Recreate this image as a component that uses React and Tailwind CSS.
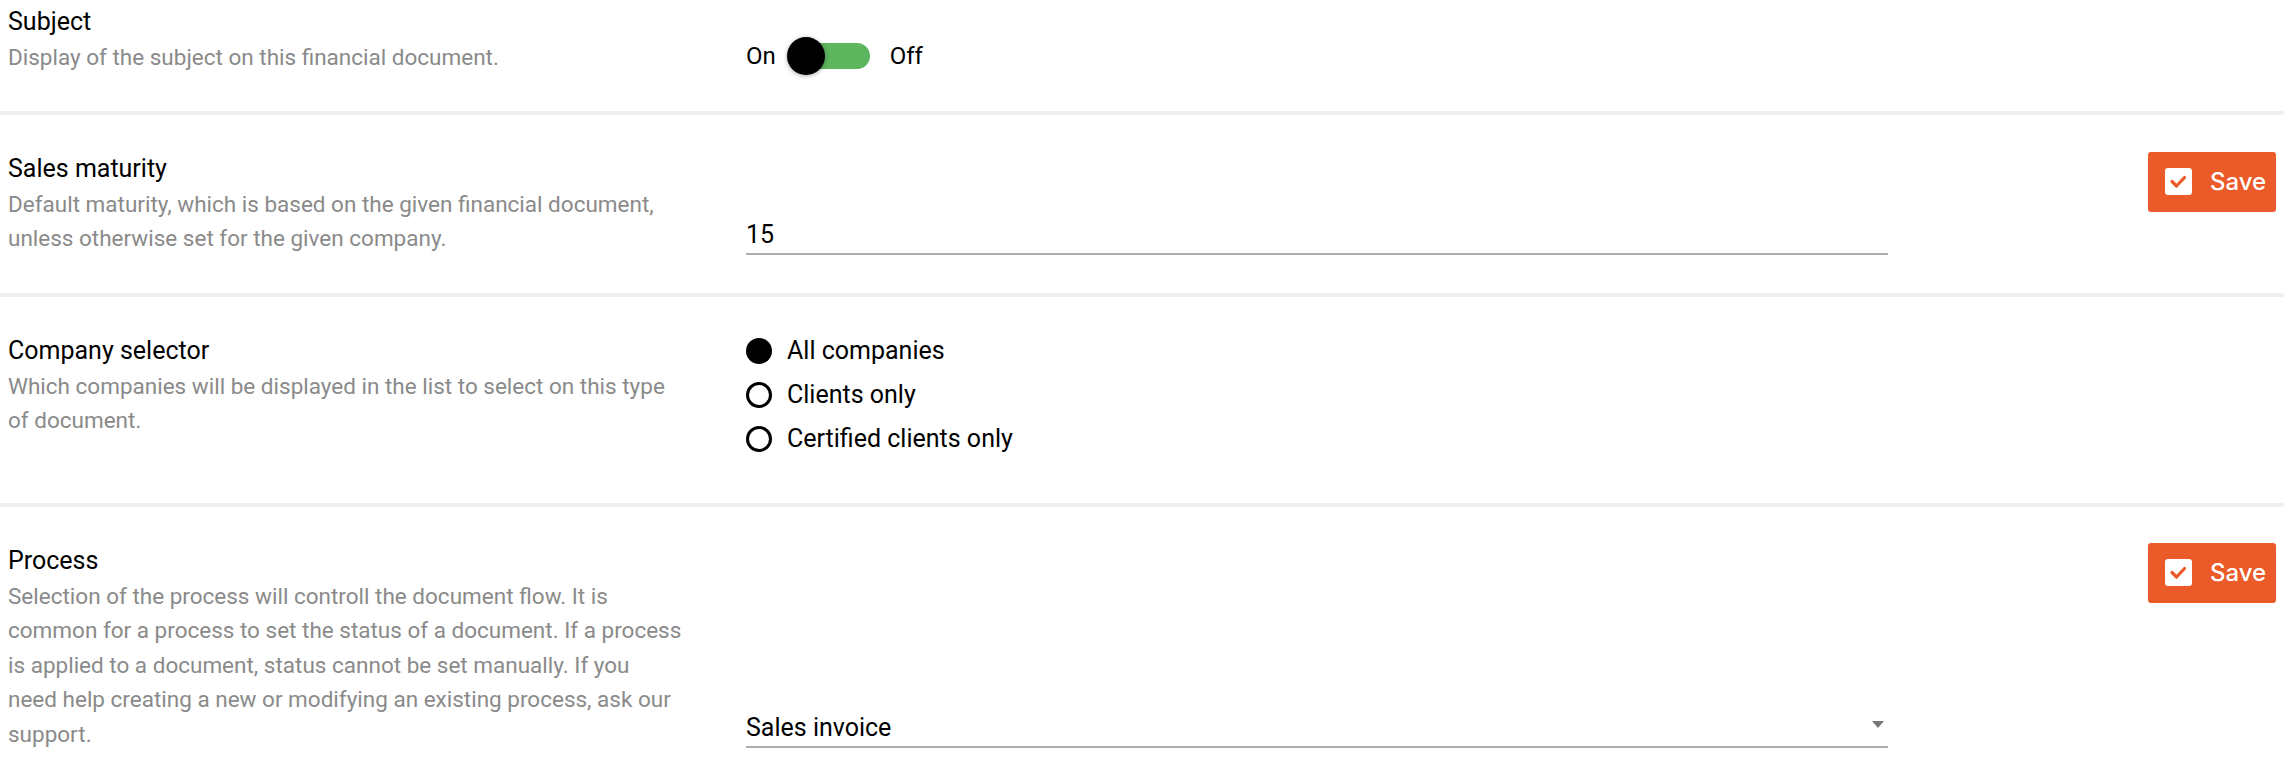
import React from "react";

function SaveButton({ extra }) {
  return (
    <button
      className={`flex h-[60px] w-[128px] items-center gap-[18px] rounded-[3px] bg-[#eb5a29] pl-[17px] text-[24px] font-medium text-white ${extra}`}
      style={{ fontFamily: "Inter, 'Liberation Sans', sans-serif" }}
    >
      <svg width="27" height="27" viewBox="0 0 27 27">
        <rect x="0" y="0" width="27" height="27" rx="3" fill="#ffffff" />
        <path d="M7 13.5 L11.5 18 L19.5 9.5" fill="none" stroke="#eb5a29" strokeWidth="3.2" strokeLinecap="round" strokeLinejoin="round" />
      </svg>
      <span className="leading-none">Save</span>
    </button>
  );
}

function Separator() {
  return <div className="h-[4px] w-full bg-[#f0f0f0]" />;
}

function Left({ title, children }) {
  return (
    <div className="w-[746px] shrink-0 pl-2">
      <div className="w-[730px]">
        <div className="text-[25px] leading-[36px] text-black">{title}</div>
        <div className="text-[22.5px] leading-[34.5px] text-[#8a8a8a]">{children}</div>
      </div>
    </div>
  );
}

function Radio({ checked, label }) {
  return (
    <div className="flex h-[44px] items-center">
      {checked ? (
        <div className="h-[26px] w-[26px] rounded-full bg-black" />
      ) : (
        <div className="box-border h-[26px] w-[26px] rounded-full border-[3.5px] border-black bg-white" />
      )}
      <span className="ml-[15px] text-[25px] text-black">{label}</span>
    </div>
  );
}

export default function App() {
  return (
    <div className="w-[2284px] bg-white" style={{ fontFamily: "Roboto, 'Liberation Sans', sans-serif" }}>
      {/* Subject */}
      <div className="flex pt-1 pb-[36px]">
        <Left title="Subject">Display of the subject on this financial document.</Left>
        <div className="flex w-[1142px] shrink-0 flex-col justify-end">
          <div className="flex h-[38px] items-center text-[24px] text-black">
            <span>On</span>
            <div className="relative ml-[11px] h-[38px] w-[83px]">
              <div className="absolute left-[8px] right-0 top-[6px] h-[26px] rounded-full bg-[#5db55e]" />
              <div className="absolute left-0 top-0 h-[38px] w-[38px] rounded-full bg-black shadow-[0_1px_4px_rgba(0,0,0,0.35)]" />
            </div>
            <span className="ml-[20px]">Off</span>
          </div>
        </div>
        <div className="flex-1" />
        <div className="mr-2 w-[128px]" />
      </div>
      <Separator />

      {/* Sales maturity */}
      <div className="flex pt-[36px] pb-[37px]">
        <Left title="Sales maturity">
          Default maturity, which is based on the given financial document,
          <br />
          unless otherwise set for the given company.
        </Left>
        <div className="flex w-[1142px] shrink-0 flex-col justify-end">
          <div className="mb-[1px] h-[38px] border-b-2 border-[#adadad] text-[25px] leading-[36px] text-black">15</div>
        </div>
        <div className="flex-1" />
        <div className="mr-2 w-[128px]">
          <SaveButton extra="mt-[1px]" />
        </div>
      </div>
      <Separator />

      {/* Company selector */}
      <div className="flex pt-[36px] pb-[42px]">
        <Left title="Company selector">
          Which companies will be displayed in the list to select on this type
          <br />
          of document.
        </Left>
        <div className="-mt-1 flex w-[1142px] shrink-0 flex-col justify-start">
          <Radio checked label="All companies" />
          <Radio label="Clients only" />
          <Radio label="Certified clients only" />
        </div>
        <div className="flex-1" />
        <div className="mr-2 w-[128px]" />
      </div>
      <Separator />

      {/* Process */}
      <div className="flex pt-[36px] pb-[36px]">
        <Left title="Process">
          Selection of the process will controll the document flow. It is
          <br />
          common for a process to set the status of a document. If a process
          <br />
          is applied to a document, status cannot be set manually. If you
          <br />
          need help creating a new or modifying an existing process, ask our
          <br />
          support.
        </Left>
        <div className="flex w-[1142px] shrink-0 flex-col justify-end">
          <div className="mb-[3px] flex h-[38px] items-center justify-between border-b-2 border-[#adadad] text-[25px] leading-[36px] text-black">
            <span>Sales invoice</span>
            <svg width="12" height="7" viewBox="0 0 12 7" className="mb-2 mr-[4px]">
              <path d="M0 0 L12 0 L6 7 Z" fill="#777777" />
            </svg>
          </div>
        </div>
        <div className="flex-1" />
        <div className="mr-2 w-[128px]">
          <SaveButton extra="" />
        </div>
      </div>
    </div>
  );
}
